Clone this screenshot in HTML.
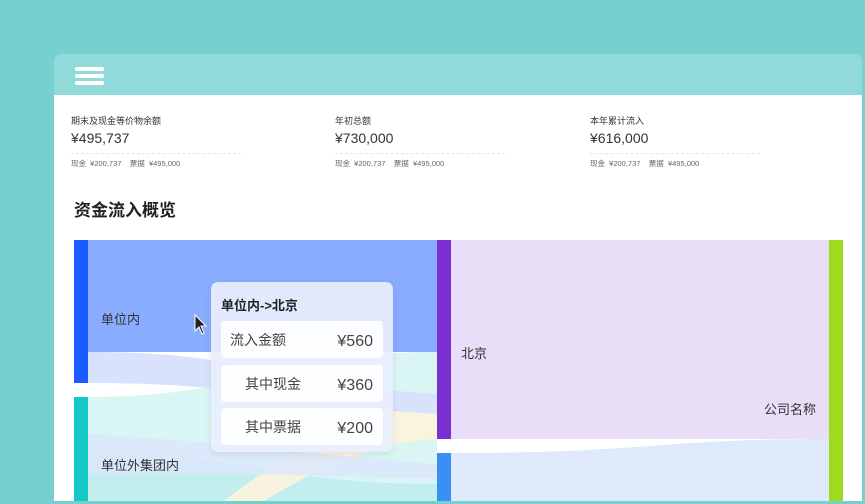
<!DOCTYPE html>
<html><head><meta charset="utf-8"><style>
*{margin:0;padding:0;box-sizing:border-box}
body{width:865px;height:504px;overflow:hidden;background:#76d0d0;font-family:"Liberation Sans","Noto Sans CJK SC",sans-serif;position:relative;color:#333}
.card{position:absolute;left:54px;top:54px;width:808px;height:447px;background:#fff;border-radius:8px 8px 0 0;overflow:hidden}
.hdr{height:41px;background:#91dada}
.bar{position:absolute;left:21px;width:29px;height:4px;border-radius:2px;background:#fff}
.st{position:absolute;top:60px;width:170px}
.st .t{font-size:9px;color:#333;height:13px}
.st .v{font-size:14px;color:#333;margin-top:3px;height:20px}
.st .l{border-top:1px dashed #e5e5e5;margin-top:3px;width:170px}
.st .s{font-size:7.5px;color:#666;margin-top:4px}
.h2{position:absolute;left:20px;top:142px;font-size:17px;font-weight:bold;color:#222}
.lab{position:absolute;font-size:13px;color:#333}
.tip{position:absolute;left:157px;top:228px;width:182px;height:170px;background:rgba(232,238,253,0.93);border-radius:7px;box-shadow:0 2px 8px rgba(0,0,0,0.08)}
.row{position:absolute;left:10px;width:162px;height:37px;background:rgba(255,255,255,0.9);border-radius:4px;font-size:14px;color:#444}
.row span{position:absolute;top:10px;line-height:18px}
.row span.n{right:10px;font-size:16px;top:12px}
</style></head><body>
<div class="card">
<div class="hdr"></div>
<div class="bar" style="top:13px"></div><div class="bar" style="top:20px"></div><div class="bar" style="top:27px"></div>
<div class="st" style="left:17px"><div class="t">期末及现金等价物余额</div><div class="v">¥495,737</div><div class="l"></div><div class="s">现金 &nbsp;¥200,737 &nbsp;&nbsp; 票据 &nbsp;¥495,000</div></div>
<div class="st" style="left:281px"><div class="t">年初总额</div><div class="v">¥730,000</div><div class="l"></div><div class="s">现金 &nbsp;¥200,737 &nbsp;&nbsp; 票据 &nbsp;¥495,000</div></div>
<div class="st" style="left:536px"><div class="t">本年累计流入</div><div class="v">¥616,000</div><div class="l"></div><div class="s">现金 &nbsp;¥200,737 &nbsp;&nbsp; 票据 &nbsp;¥495,000</div></div>
<div class="h2">资金流入概览</div>
<svg style="position:absolute;left:0;top:0" width="808" height="447">
<path d="M34 343 C200 343 220 298 383 298 L383 447 L34 447Z" fill="#d9f5f4"/>
<path d="M34 400 C200 400 220 430 383 430 L383 447 L34 447Z" fill="#c2eeee"/>
<path d="M170 447 C230 400 300 360 383 348 L383 385 C300 390 240 430 210 447Z" fill="#fdf3dc" opacity="0.9"/>
<rect x="34" y="186" width="349" height="112" fill="#8aacfe"/>
<path d="M34 298 C200 298 220 330 383 340 L383 360 C220 350 200 329 34 329Z" fill="#d8e2fd"/>
<path d="M34 380 C200 390 250 400 383 410 L383 425 C250 420 150 420 34 420Z" fill="#dbe6fb" opacity="0.8"/>
<rect x="397" y="186" width="378" height="199" fill="#e8def7"/>
<path d="M397 399 C600 399 600 385 775 385 L775 447 L397 447Z" fill="#deeafc"/>
<rect x="20" y="186" width="14" height="143" fill="#1a5cff"/>
<rect x="20" y="343" width="14" height="104" fill="#14c8c8"/>
<rect x="383" y="186" width="14" height="199" fill="#7a2fd0"/>
<rect x="383" y="399" width="14" height="48" fill="#3a8ff5"/>
<rect x="775" y="186" width="14" height="261" fill="#a0d91e"/>
<path d="M141 261 L141 277 L145 273 L148 280 L150 279 L147 272 L152 272 Z" fill="#222" stroke="#fff" stroke-width="1"/>
</svg>
<div class="lab" style="left:47px;top:255px">单位内</div>
<div class="lab" style="left:47px;top:401px">单位外集团内</div>
<div class="lab" style="left:407px;top:289px">北京</div>
<div class="lab" style="left:710px;top:345px">公司名称</div>
<div class="tip">
<div style="position:absolute;left:10px;top:13px;font-size:13px;color:#222;font-weight:bold">单位内-&gt;北京</div>
<div class="row" style="top:39px"><span style="left:9px">流入金额</span><span class="n">¥560</span></div>
<div class="row" style="top:83px"><span style="left:24px">其中现金</span><span class="n">¥360</span></div>
<div class="row" style="top:126px"><span style="left:24px">其中票据</span><span class="n">¥200</span></div>
</div>
</div>
</body></html>
